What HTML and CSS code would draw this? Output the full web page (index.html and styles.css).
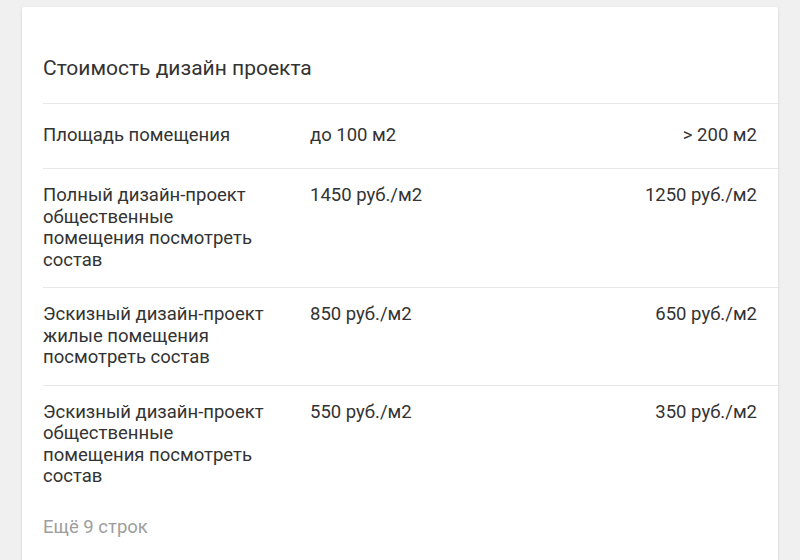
FILE: index.html
```html
<!DOCTYPE html>
<html lang="ru">
<head>
<meta charset="utf-8">
<title>Стоимость дизайн проекта</title>
<link rel="stylesheet" href="styles.css">
</head>
<body>
<div class="card">
  <div class="card-title">Стоимость дизайн проекта</div>
  <div class="table">
    <div class="row head">
      <div class="c1">Площадь помещения</div>
      <div class="c2">до 100 м2</div>
      <div class="c3">&gt; 200 м2</div>
    </div>
    <div class="row">
      <div class="c1">Полный дизайн-проект общественные помещения посмотреть состав</div>
      <div class="c2">1450 руб./м2</div>
      <div class="c3">1250 руб./м2</div>
    </div>
    <div class="row">
      <div class="c1">Эскизный дизайн-проект жилые помещения посмотреть состав</div>
      <div class="c2">850 руб./м2</div>
      <div class="c3">650 руб./м2</div>
    </div>
    <div class="row last">
      <div class="c1">Эскизный дизайн-проект общественные помещения посмотреть состав</div>
      <div class="c2">550 руб./м2</div>
      <div class="c3">350 руб./м2</div>
    </div>
  </div>
  <div class="more">Ещё 9 строк</div>
</div>
</body>
</html>
```

FILE: styles.css
```css
html, body {
  margin: 0;
  padding: 0;
  background: #f0f0f0;
  font-family: Roboto, "Liberation Sans", Arial, sans-serif;
  color: #333333;
}

.card {
  margin: 7px 22px 0 22px;
  background: #ffffff;
  border-radius: 2px;
  box-shadow: 0 1px 3px rgba(0, 0, 0, 0.14);
  min-height: 560px;
  padding-left: 21px;
}

.card-title {
  font-size: 21px;
  line-height: 24px;
  padding: 49px 0 23px 0;
  border-bottom: 1px solid #e8e8e8;
}

.row {
  display: grid;
  grid-template-columns: 267px 1fr auto;
  font-size: 18.5px;
  line-height: 21.5px;
  padding: 16px 21px 16px 0;
  border-bottom: 1px solid #e8e8e8;
}

.row.head {
  line-height: 21px;
  padding-top: 21px;
  padding-bottom: 22px;
}

.row.last {
  border-bottom: none;
}

.c1 {
  padding-right: 42px;
}

.c3 {
  text-align: right;
}

.more {
  font-size: 18.5px;
  line-height: 21px;
  color: #9e9e9e;
  padding-top: 13px;
}
```
